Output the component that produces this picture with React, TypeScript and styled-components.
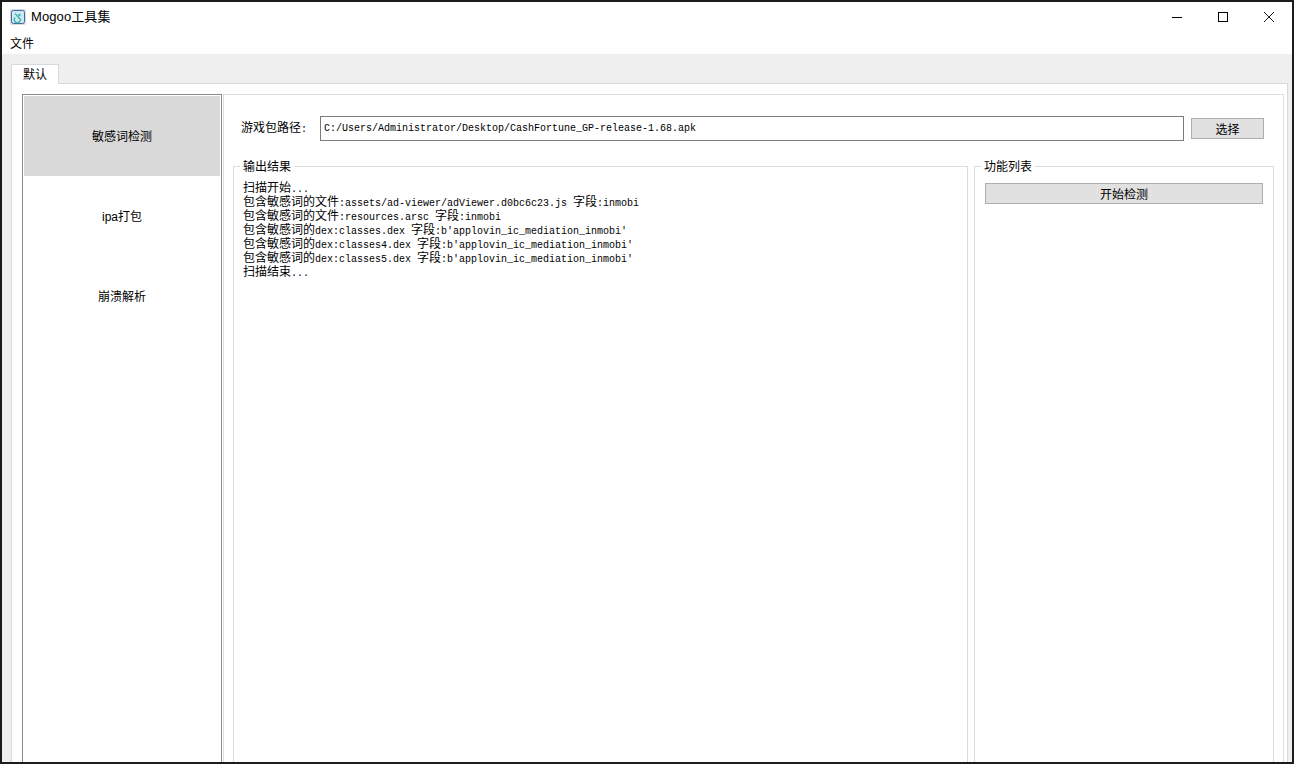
import React from 'react';
import styled, { createGlobalStyle } from 'styled-components';

const Global = createGlobalStyle`
  html, body { margin: 0; padding: 0; background: #1c1c1c; overflow: hidden; }
  * { box-sizing: border-box; }
`;

const cjk = '"Noto Sans CJK SC", sans-serif';
const mono = '"Liberation Mono", monospace';

const Frame = styled.div`
  width: 1294px;
  height: 764px;
  padding: 2px;
  background: #1c1c1c;
  overflow: hidden;
`;
const Window = styled.div`
  height: 760px;
  background: #fff;
  display: flex;
  flex-direction: column;
  overflow: hidden;
  color: #000;
`;
const TitleBar = styled.div`
  height: 30px;
  flex: none;
  display: flex;
  align-items: center;
  padding: 0 0 1px 8px;
`;
const AppIcon = styled.svg`
  width: 16px;
  height: 16px;
  flex: none;
`;
const Title = styled.span`
  margin-left: 5px;
  font: 13px/15px "Liberation Sans", ${cjk};
  letter-spacing: 0.1px;
  color: #000;
`;
const Controls = styled.div`
  margin-left: auto;
  display: flex;
  align-items: center;
`;
const ControlButton = styled.div`
  width: 46px;
  height: 29px;
  display: flex;
  align-items: center;
  justify-content: center;
`;
const MenuBar = styled.div`
  height: 22px;
  flex: none;
  display: flex;
  align-items: center;
  padding: 0 0 1px 8px;
`;
const MenuItem = styled.span`
  font: 12px/15px ${cjk};
`;
const Workspace = styled.div`
  flex: 1;
  background: #efefef;
  padding: 10px 4px 0 9px;
  display: flex;
  flex-direction: column;
  min-height: 0;
`;
const TabStrip = styled.div`
  display: flex;
  height: 20px;
  flex: none;
  position: relative;
  z-index: 1;
`;
const Tab = styled.div`
  width: 48px;
  height: 20px;
  background: #fff;
  border: 1px solid #d9d9d9;
  border-bottom: none;
  font: 12px/17px ${cjk};
  text-align: center;
`;
const Pane = styled.div`
  flex: 1;
  margin-top: -1px;
  background: #fff;
  border: 1px solid #d9d9d9;
  border-bottom: none;
  padding: 10px 3px 0 10px;
  display: flex;
  gap: 1px;
  min-height: 0;
`;
const Nav = styled.div`
  width: 200px;
  height: 700px;
  flex: none;
  border: 1px solid #8a8a8a;
  border-bottom: none;
  padding: 1px;
  display: flex;
  flex-direction: column;
`;
const NavItem = styled.div<{ $active?: boolean }>`
  height: 80px;
  flex: none;
  display: flex;
  align-items: center;
  justify-content: center;
  padding-top: 2px;
  background: ${p => (p.$active ? '#d9d9d9' : '#fff')};
  font: 12px/15px "Liberation Sans", ${cjk};
  color: #000;
`;
const Content = styled.div`
  flex: 1;
  height: 700px;
  border: 1px solid #dedede;
  border-bottom: none;
  padding: 21px 9px 0 9px;
  display: flex;
  flex-direction: column;
`;
const PathRow = styled.div`
  display: flex;
  align-items: center;
  height: 25px;
  flex: none;
  padding-left: 8px;
  padding-right: 10px;
`;
const PathLabel = styled.span`
  width: 79px;
  flex: none;
  font: 10px/15px ${mono};
  white-space: pre;
`;
const PathInput = styled.div`
  flex: 1;
  height: 25px;
  border: 1px solid #7a7a7a;
  background: #fff;
  padding-left: 3px;
  font: 10px/23px ${mono};
  white-space: pre;
`;
const SmallButton = styled.div`
  width: 73px;
  height: 21px;
  flex: none;
  margin-left: 7px;
  background: #e1e1e1;
  border: 1px solid #adadad;
  font: 12px/20px ${cjk};
  text-align: center;
`;
const Groups = styled.div`
  flex: 1;
  margin-top: 25px;
  display: flex;
  gap: 6px;
`;
const Group = styled.div<{ $width: number }>`
  width: ${p => p.$width}px;
  flex: none;
  height: 640px;
  position: relative;
  border: 1px solid #dcdcdc;
  border-bottom: none;
`;
const GroupTitle = styled.span`
  position: absolute;
  left: 6px;
  top: -9px;
  padding: 0 3px;
  background: #fff;
  font: 12px/15px ${cjk};
`;
const Output = styled.div`
  padding: 13px 0 0 9px;
`;
const OutputLine = styled.div`
  height: 14px;
  font: 10px/14px ${mono};
  white-space: pre;
`;
const Zh = styled.span`
  display: inline-block;
  height: 14px;
  vertical-align: baseline;
  font: 12px/14px ${cjk};
`;
const FuncButton = styled.div`
  margin: 16px 10px 0;
  height: 21px;
  background: #e1e1e1;
  border: 1px solid #adadad;
  font: 12px/20px ${cjk};
  text-align: center;
`;

const mixed = (s: string) =>
  s.split(/([\u4e00-\u9fff]+)/).map((part, i) => (i % 2 ? <Zh key={i}>{part}</Zh> : part));

const lines = [
  '扫描开始...',
  '包含敏感词的文件:assets/ad-viewer/adViewer.d0bc6c23.js 字段:inmobi',
  '包含敏感词的文件:resources.arsc 字段:inmobi',
  "包含敏感词的dex:classes.dex 字段:b'applovin_ic_mediation_inmobi'",
  "包含敏感词的dex:classes4.dex 字段:b'applovin_ic_mediation_inmobi'",
  "包含敏感词的dex:classes5.dex 字段:b'applovin_ic_mediation_inmobi'",
  '扫描结束...',
];

export default function App() {
  return (
    <Frame>
      <Global />
      <Window>
        <TitleBar>
          <AppIcon viewBox="0 0 16 16">
            <rect x="0" y="0" width="16" height="16" rx="2" fill="#d5dae6" />
            <rect x="1.5" y="1.5" width="13" height="13" rx="2" fill="#cfeaf0" stroke="#47659f" />
            <path d="M5 4.5l6 6.5" stroke="#2fb5ad" strokeWidth="1.3" fill="none" />
            <path d="M5.2 8.5a3 3 0 1 0 5 2.5" stroke="#2fb5ad" strokeWidth="1.3" fill="none" />
            <circle cx="9.5" cy="6" r="1.2" fill="#2fb5ad" />
          </AppIcon>
          <Title>Mogoo工具集</Title>
          <Controls>
            <ControlButton>
              <svg width="12" height="12" viewBox="0 0 12 12"><path d="M1 6.5h10" stroke="#000" /></svg>
            </ControlButton>
            <ControlButton>
              <svg width="12" height="12" viewBox="0 0 12 12"><rect x="1.5" y="1.5" width="9" height="9" fill="none" stroke="#000" /></svg>
            </ControlButton>
            <ControlButton>
              <svg width="12" height="12" viewBox="0 0 12 12"><path d="M1 1l10 10M11 1L1 11" stroke="#000" strokeWidth="0.9" /></svg>
            </ControlButton>
          </Controls>
        </TitleBar>
        <MenuBar><MenuItem>文件</MenuItem></MenuBar>
        <Workspace>
          <TabStrip><Tab>默认</Tab></TabStrip>
          <Pane>
            <Nav>
              <NavItem $active>敏感词检测</NavItem>
              <NavItem>ipa打包</NavItem>
              <NavItem>崩溃解析</NavItem>
            </Nav>
            <Content>
              <PathRow>
                <PathLabel>{mixed('游戏包路径:')}</PathLabel>
                <PathInput>C:/Users/Administrator/Desktop/CashFortune_GP-release-1.68.apk</PathInput>
                <SmallButton>选择</SmallButton>
              </PathRow>
              <Groups>
                <Group $width={735}>
                  <GroupTitle>输出结果</GroupTitle>
                  <Output>
                    {lines.map(l => <OutputLine key={l}>{mixed(l)}</OutputLine>)}
                  </Output>
                </Group>
                <Group $width={300}>
                  <GroupTitle>功能列表</GroupTitle>
                  <FuncButton>开始检测</FuncButton>
                </Group>
              </Groups>
            </Content>
          </Pane>
        </Workspace>
      </Window>
    </Frame>
  );
}
